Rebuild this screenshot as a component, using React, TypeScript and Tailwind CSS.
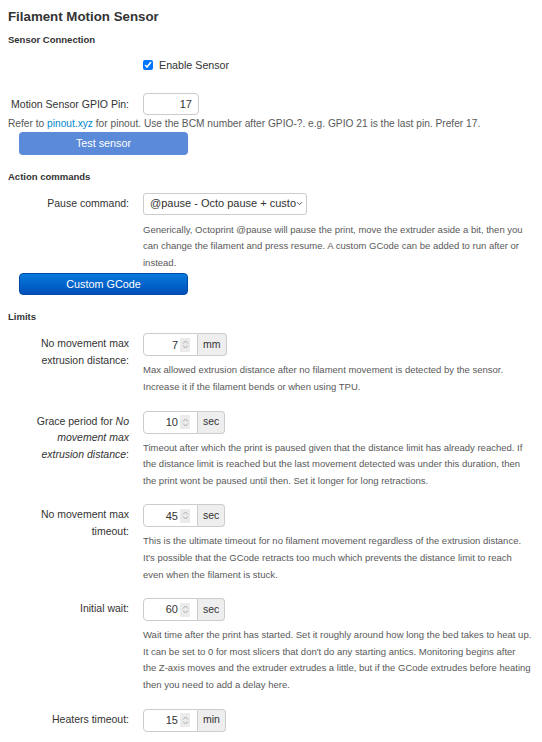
import { ReactNode } from 'react';

function Spinner() {
  return (
    <span className="ml-[2px] flex h-[14px] w-[10px] items-center justify-center bg-[#ebebeb]">
      <svg width="7" height="11" viewBox="0 0 7 11" fill="none" stroke="#a9a9a9" strokeWidth="1">
        <path d="M1 4.5 3.5 2 6 4.5" />
        <path d="M1 6.5 3.5 9 6 6.5" />
      </svg>
    </span>
  );
}

function NumberField({ value, unit }: { value: string; unit: string }) {
  return (
    <div className="flex h-[23px] w-fit">
      <div className="flex w-[55px] items-center justify-end rounded-l-[4px] border border-[#ccc] bg-white pr-[7px] text-[11px]">
        <span>{value}</span>
        <Spinner />
      </div>
      <div className="flex items-center rounded-r-[4px] border border-l-0 border-[#ccc] bg-[#eee] px-[5px] text-[10.5px]">
        {unit}
      </div>
    </div>
  );
}

function Row({ label, children }: { label: ReactNode; children: ReactNode }) {
  return (
    <div className="flex items-start">
      <div className="w-[121px] shrink-0 pt-[2px] text-right text-[10.5px] leading-[16.5px]">{label}</div>
      <div className="ml-[14px] min-w-0 flex-1">{children}</div>
    </div>
  );
}

function Help({ children }: { children: ReactNode }) {
  return <p className="mt-[6px] whitespace-nowrap text-[9.5px] leading-[16.6px] text-[#595959]">{children}</p>;
}

export default function App() {
  return (
    <div
      className="min-h-[742px] w-[542px] bg-white px-[8px] text-[#333]"
      style={{ fontFamily: '"Liberation Sans", Arial, sans-serif' }}
    >
      <h1 className="pt-[8px] text-[13.3px] font-bold leading-[18px]">Filament Motion Sensor</h1>

      {/* Sensor connection */}
      <h2 className="mt-[7px] text-[9.5px] font-bold leading-[14px]">Sensor Connection</h2>
      <label className="mt-[10px] ml-[135px] flex h-[16px] items-center gap-[6px] text-[10.7px]">
        <input type="checkbox" checked readOnly className="m-0 h-[10px] w-[10px] accent-[#0075ff]" />
        Enable Sensor
      </label>
      <div className="mt-[20px] flex items-start">
        <div className="w-[121px] shrink-0 whitespace-nowrap pt-[3px] text-right text-[10.5px] leading-[16.5px]">
          Motion Sensor GPIO Pin:
        </div>
        <div className="ml-[14px] flex h-[22px] w-[56px] items-center justify-end rounded-[4px] border border-[#ccc] pr-[6px] text-[11px]">
          17
        </div>
      </div>
      <p className="mt-[3px] whitespace-nowrap text-[10.2px] leading-[12px] text-[#595959]">
        Refer to <span className="text-[#0088cc]">pinout.xyz</span> for pinout. Use the BCM number after GPIO-?. e.g. GPIO 21 is the last pin. Prefer 17.
      </p>
      <button className="mt-[1px] ml-[11px] h-[23px] w-[169px] rounded-[4px] bg-[#5b8ad9] text-[10.8px] text-white">
        Test sensor
      </button>

      {/* Action commands */}
      <h2 className="mt-[15px] text-[9.5px] font-bold leading-[14px]">Action commands</h2>
      <div className="mt-[9px]">
        <Row label="Pause command:">
          <div className="flex h-[22px] w-[164px] items-center justify-between rounded-[3px] border border-[#ccc] pl-[6px] pr-[3px] text-[11px]">
            <span className="whitespace-nowrap">@pause - Octo pause + custo</span>
            <svg width="7" height="5" viewBox="0 0 7 5" fill="none" stroke="#555" strokeWidth="1">
              <path d="M1 1.2 3.5 3.7 6 1.2" />
            </svg>
          </div>
          <p className="mt-[7px] whitespace-nowrap text-[9.5px] leading-[16.6px] text-[#595959]">
            Generically, Octoprint @pause will pause the print, move the extruder aside a bit, then you
            <br />
            can change the filament and press resume. A custom GCode can be added to run after or
            <br />
            instead.
          </p>
        </Row>
      </div>
      <button className="ml-[11px] h-[22px] w-[169px] rounded-[4px] border border-[#0049a6] bg-linear-to-b from-[#0a79dd] to-[#0050b8] text-[10.8px] text-white">
        Custom GCode
      </button>

      {/* Limits */}
      <h2 className="mt-[15px] text-[9.5px] font-bold leading-[14px]">Limits</h2>
      <div className="mt-[9px] flex flex-col gap-[15px] pb-[12px]">
        <Row
          label={
            <>
              No movement max
              <br />
              extrusion distance:
            </>
          }
        >
          <NumberField value="7" unit="mm" />
          <Help>
            Max allowed extrusion distance after no filament movement is detected by the sensor.
            <br />
            Increase it if the filament bends or when using TPU.
          </Help>
        </Row>
        <Row
          label={
            <>
              Grace period for <em>No</em>
              <br />
              <em>movement max</em>
              <br />
              <em>extrusion distance</em>:
            </>
          }
        >
          <NumberField value="10" unit="sec" />
          <Help>
            Timeout after which the print is paused given that the distance limit has already reached. If
            <br />
            the distance limit is reached but the last movement detected was under this duration, then
            <br />
            the print wont be paused until then. Set it longer for long retractions.
          </Help>
        </Row>
        <Row
          label={
            <>
              No movement max
              <br />
              timeout:
            </>
          }
        >
          <NumberField value="45" unit="sec" />
          <Help>
            This is the ultimate timeout for no filament movement regardless of the extrusion distance.
            <br />
            It's possible that the GCode retracts too much which prevents the distance limit to reach
            <br />
            even when the filament is stuck.
          </Help>
        </Row>
        <Row label="Initial wait:">
          <NumberField value="60" unit="sec" />
          <Help>
            Wait time after the print has started. Set it roughly around how long the bed takes to heat up.
            <br />
            It can be set to 0 for most slicers that don't do any starting antics. Monitoring begins after
            <br />
            the Z-axis moves and the extruder extrudes a little, but if the GCode extrudes before heating
            <br />
            then you need to add a delay here.
          </Help>
        </Row>
        <Row label="Heaters timeout:">
          <NumberField value="15" unit="min" />
        </Row>
      </div>
    </div>
  );
}
